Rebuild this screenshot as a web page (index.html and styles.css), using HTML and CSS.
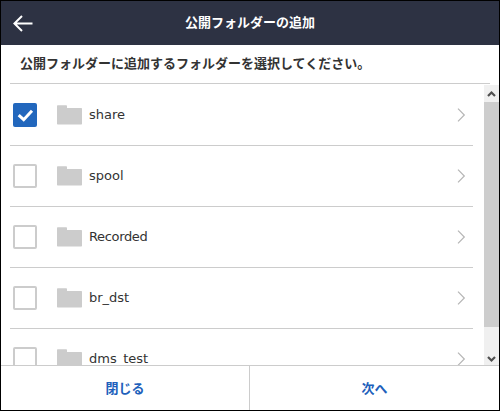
FILE: index.html
```html
<!DOCTYPE html>
<html lang="ja">
<head>
<meta charset="utf-8">
<title>公開フォルダーの追加</title>
<link rel="stylesheet" href="styles.css">
</head>
<body>
<svg width="0" height="0" class="defs">
  <symbol id="folder" viewBox="0 0 25 20"><path d="M0 1Q0 .3 .7 .3H9.3Q10 .3 10 1V3H24.3Q25 3 25 3.7V18.8Q25 19.5 24.3 19.5H.7Q0 19.5 0 18.8Z" fill="#ccc"/></symbol>
  <symbol id="chevron" viewBox="0 0 9 14"><path d="M1 .7L7.3 7L1 13.3" fill="none" stroke="#b5b5b5" stroke-width="1.2"/></symbol>
</svg>
<div class="dialog">
  <header class="header">
    <svg class="back" width="20" height="18" viewBox="0 0 20 18"><path d="M9 1L1.4 8.5L9 16M1.5 8.5H19.5" fill="none" stroke="#fff" stroke-width="2"/></svg>
    <h1 class="title">公開フォルダーの追加</h1>
  </header>
  <p class="prompt">公開フォルダーに追加するフォルダーを選択してください。</p>
  <div class="body">
    <ul class="list">
      <li class="row"><span class="check checked"><svg width="24" height="24" viewBox="0 0 24 24"><path d="M5.7 12.2L10.7 16.7L19 7.8" fill="none" stroke="#fff" stroke-width="3"/></svg></span><svg class="folder"><use href="#folder"/></svg><span class="name">share</span><svg class="chevron"><use href="#chevron"/></svg></li>
      <li class="row"><span class="check"></span><svg class="folder"><use href="#folder"/></svg><span class="name">spool</span><svg class="chevron"><use href="#chevron"/></svg></li>
      <li class="row"><span class="check"></span><svg class="folder"><use href="#folder"/></svg><span class="name tight">Recorded</span><svg class="chevron"><use href="#chevron"/></svg></li>
      <li class="row"><span class="check"></span><svg class="folder"><use href="#folder"/></svg><span class="name">br_dst</span><svg class="chevron"><use href="#chevron"/></svg></li>
      <li class="row"><span class="check"></span><svg class="folder"><use href="#folder"/></svg><span class="name">dms_test</span><svg class="chevron"><use href="#chevron"/></svg></li>
    </ul>
    <div class="scrollbar">
      <svg class="arrow" viewBox="0 0 15 17"><path d="M4 11L7.5 7.5L11 11" fill="none" stroke="#505050" stroke-width="2.2"/></svg>
      <div class="thumb"></div>
      <svg class="arrow down" viewBox="0 0 15 17"><path d="M4 9L7.5 12.5L11 9" fill="none" stroke="#505050" stroke-width="2.2"/></svg>
    </div>
  </div>
  <footer class="footer">
    <button class="action">閉じる</button>
    <button class="action">次へ</button>
  </footer>
</div>
</body>
</html>
```
FILE: styles.css
```css
* { box-sizing: border-box; }
body {
  margin: 0;
  font: 13px "DejaVu Sans", "Noto Sans CJK JP", sans-serif;
  color: #333;
}
.defs { display: block; }
.dialog {
  display: flex;
  flex-direction: column;
  width: 500px;
  height: 411px;
  border: 1px solid #000;
  background: #fff;
  overflow: hidden;
}
.header {
  display: grid;
  grid-template-columns: 48px 1fr 48px;
  align-items: center;
  flex: none;
  height: 44px;
  background: #2d3243;
}
.back { margin: 1px 0 0 12px; }
.title {
  margin: 0 0 2px;
  font: bold 13px/20px "Noto Sans CJK JP", sans-serif;
  color: #fff;
  text-align: center;
}
.prompt {
  flex: none;
  height: 39px;
  margin: 0 9px;
  padding: 0 10px;
  border-bottom: 1px solid #ccc;
  font: bold 13px/36px "Noto Sans CJK JP", sans-serif;
  white-space: nowrap;
}
.body {
  display: flex;
  flex: 1;
  min-height: 0;
  padding-top: 1px;
  overflow: hidden;
}
.list {
  flex: 0 0 463px;
  margin: 0 11px 0 9px;
  padding: 0;
  list-style: none;
}
.row {
  display: flex;
  align-items: center;
  height: 61px;
  padding: 0 7px 0 3px;
  border-bottom: 1px solid #ccc;
}
.check {
  width: 24px;
  height: 24px;
  border: 2px solid #ccc;
  border-radius: 2px;
}
.checked { border: 0; background: #2267bd; }
.checked svg { display: block; }
.folder { width: 25px; height: 20px; margin-left: 20px; }
.name { margin-left: 7px; line-height: 18px; }
.tight { letter-spacing: -.35px; }
.chevron { width: 9px; height: 14px; margin-left: auto; }
.scrollbar {
  display: flex;
  flex-direction: column;
  width: 15px;
  height: 280px;
  background: #f0f0f0;
}
.arrow { width: 15px; height: 17px; flex: none; }
.thumb { height: 225px; background: #cdcdcd; }
.down { margin-top: auto; }
.footer {
  display: grid;
  grid-template-columns: 249px 1fr;
  flex: none;
  height: 45px;
  border-top: 1px solid #ccc;
}
.action {
  padding: 0 0 1px;
  border: 0;
  background: #fff;
  color: #2060bb;
  font: bold 13px/20px "Noto Sans CJK JP", sans-serif;
}
.action:first-child { border-right: 1px solid #ccc; }
```
